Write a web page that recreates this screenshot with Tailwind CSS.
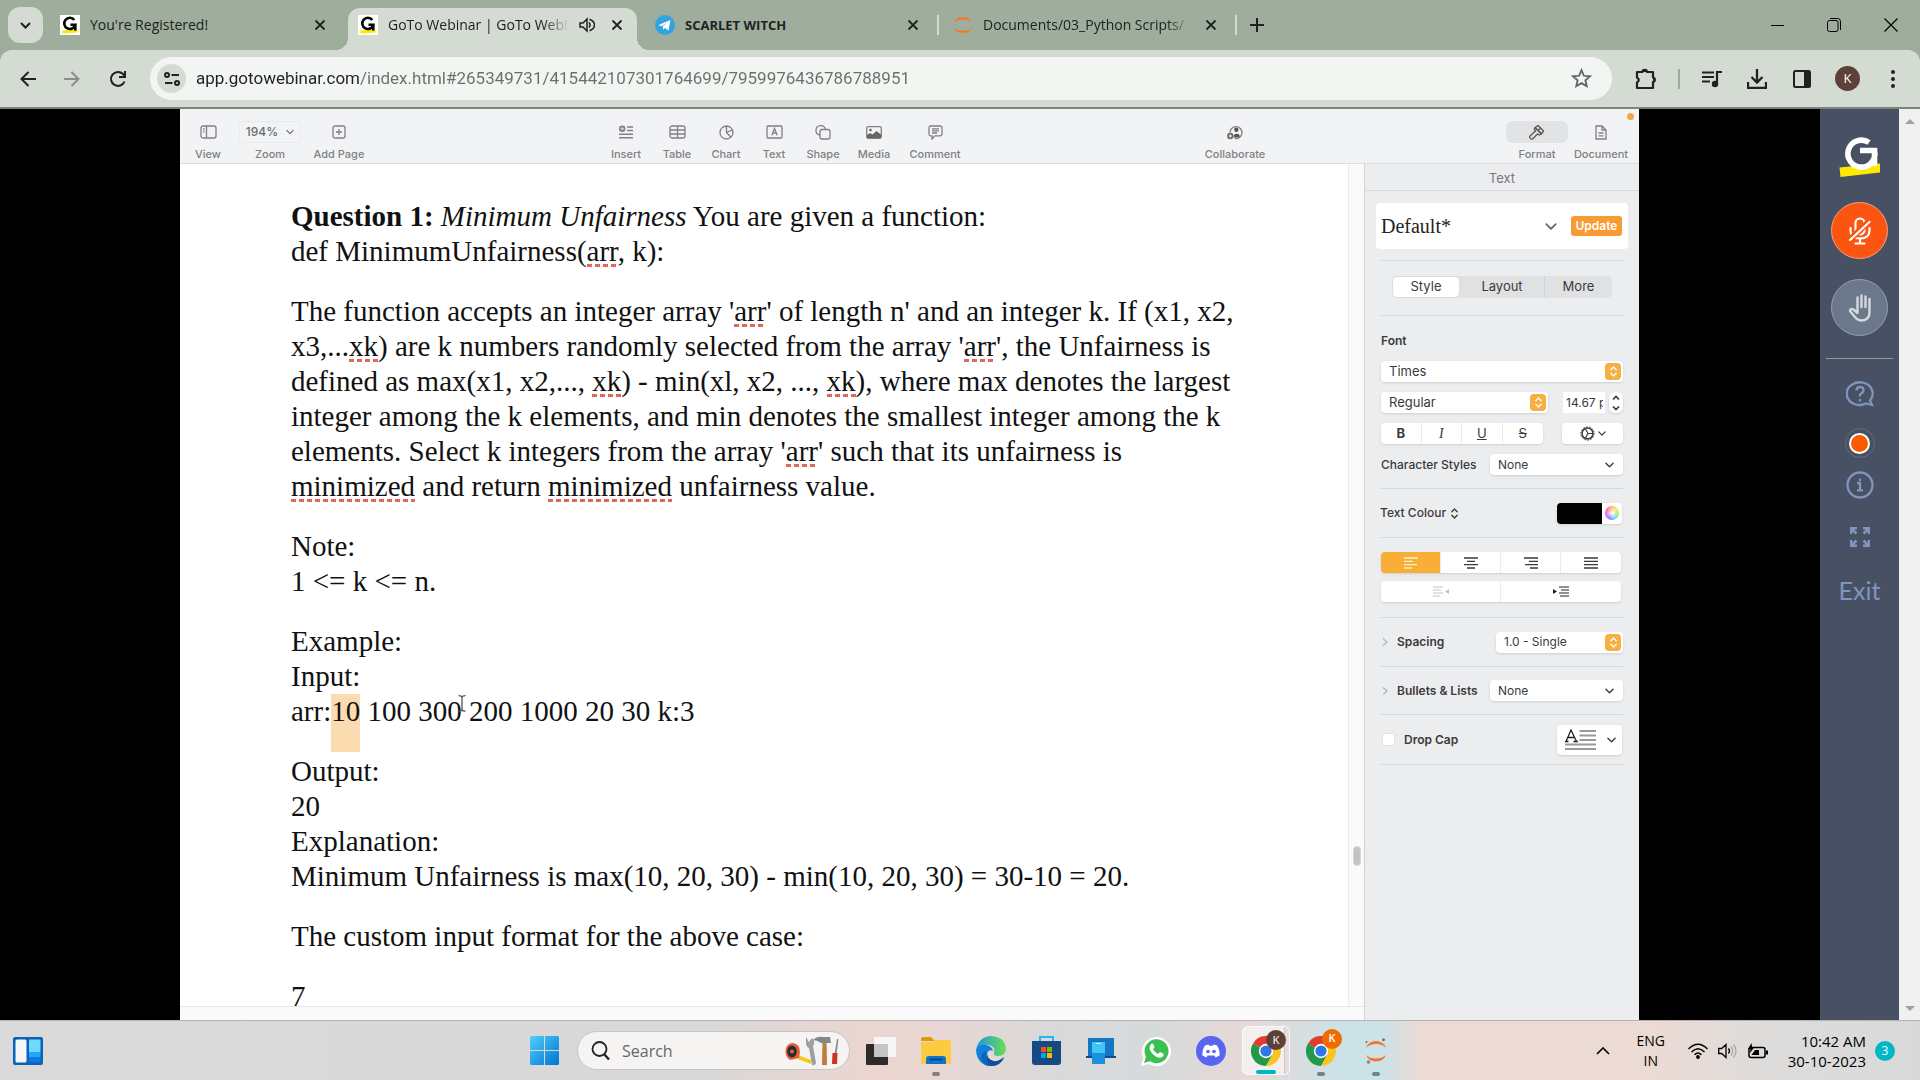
<!DOCTYPE html>
<html lang="en">
<head>
<meta charset="utf-8">
<title>GoTo Webinar | GoTo Webinar</title>
<script src="https://cdn.jsdelivr.net/npm/@tailwindcss/browser@4"></script>
</head>
<body class="flex h-screen flex-col overflow-hidden bg-black font-['Open_Sans','Noto_Sans',sans-serif] text-[#202124]">

<svg class="hidden" aria-hidden="true">
  <symbol id="close" viewBox="0 0 12 12"><path d="M1.5 1.5l9 9M10.5 1.5l-9 9" fill="none" stroke="currentColor" stroke-width="1.8"/></symbol>
  <symbol id="goto" viewBox="0 0 20 20"><rect width="20" height="20" fill="#fff"/><path d="M2.5 15.600l15-1v3l-15 1z" fill="#ffe900"/><path d="M14.300 5A5.600 5.600 0 1 0 15.300 9.700H10.500M15.300 9v6.500" fill="none" stroke="#000" stroke-width="2.600"/></symbol>
  <symbol id="jupyter" viewBox="0 0 20 20"><path d="M1 7C3 .5 17 .5 19 7 15 3.500 5 3.500 1 7zM1 13c2 6.500 16 6.500 18 0-4 3.500-14 3.500-18 0z" fill="#f37726"/></symbol>
  <symbol id="down" viewBox="0 0 10 6"><path d="M1 1l4 4 4-4" fill="none" stroke="currentColor" stroke-width="1.500" stroke-linecap="round" stroke-linejoin="round"/></symbol>
  <symbol id="updown" viewBox="0 0 10 14"><path d="M2 5l3-3 3 3M2 9l3 3 3-3" fill="none" stroke="currentColor" stroke-width="1.500" stroke-linecap="round" stroke-linejoin="round"/></symbol>
  <symbol id="chrome" viewBox="0 0 30 30"><path d="M15 15L2 7.500A15 15 0 0 1 28 7.500z" fill="#e33b2e"/><path d="M15 15L2 7.500A15 15 0 0 0 15 30l6.500-11.500z" fill="#229a4a"/><path d="M15 8h13.200A15 15 0 0 1 15 30l6.500-11.500z" fill="#fcc31e"/><circle cx="15" cy="15" r="7.200" fill="#fff"/><circle cx="15" cy="15" r="5.600" fill="#2f77e8"/></symbol>
</svg>

<!-- Tab strip -->
<header class="flex h-[50px] shrink-0 items-center bg-[#9fae9c] text-sm">
  <button aria-label="Search tabs" class="ml-2 flex h-9 w-[35px] items-center justify-center rounded-xl bg-[#d4dbd2]"><svg class="h-[7px] w-[11px]" viewBox="0 0 11 7"><path d="M1 1l4.500 4.500L10 1" fill="none" stroke="currentColor" stroke-width="2"/></svg></button>
  <nav class="ml-[7px] flex h-full items-end">
    <div class="flex h-[42px] w-[298px] items-center pr-[22px] pb-2 pl-[10px]">
      <svg class="size-5 shrink-0"><use href="#goto"/></svg>
      <a href="#" class="ml-[10px] flex-1 truncate">You're Registered!</a>
      <button aria-label="Close tab"><svg class="size-3"><use href="#close"/></svg></button>
    </div>
    <div class="relative mr-2 flex h-[42px] w-[289px] items-center rounded-t-xl bg-[#d4dbd2] pr-[14px] pb-2 pl-[10px]">
      <span class="absolute bottom-0 -left-3 size-3 bg-[radial-gradient(circle_at_0_0,transparent_12px,#d4dbd2_12px)]"></span>
      <span class="absolute -right-3 bottom-0 size-3 bg-[radial-gradient(circle_at_100%_0,transparent_12px,#d4dbd2_12px)]"></span>
      <svg class="size-5 shrink-0"><use href="#goto"/></svg>
      <a href="#" class="ml-[10px] w-[182px] whitespace-nowrap mask-r-from-85% mask-r-to-100%">GoTo Webinar | GoTo Webi</a>
      <button aria-label="Mute tab" class="ml-[9px]"><svg class="size-4" viewBox="0 0 16 16"><path d="M1 6h3l4-4v12l-4-4H1z" fill="none" stroke="currentColor" stroke-width="1.500"/><path d="M10 5.500q2 2.500 0 5M10.500 2.200q5 2 5 5.800t-5 5.800" fill="none" stroke="currentColor" stroke-width="1.500"/></svg></button>
      <button aria-label="Close tab" class="ml-auto"><svg class="size-3"><use href="#close"/></svg></button>
    </div>
    <div class="flex h-[42px] w-[298px] items-center pr-1 pb-2 pl-[10px]">
      <svg class="size-5 shrink-0" viewBox="0 0 20 20"><circle cx="10" cy="10" r="10" fill="#2fa4df"/><path d="M3.500 10L15.500 5l-2 10.500-3.500-2.600-1.800 1.700-.4-3.300L13 7.300l-6.500 4z" fill="#fff"/></svg>
      <a href="#" class="ml-[10px] flex-1 truncate font-bold text-[13px]">SCARLET WITCH</a>
      <button aria-label="Close tab"><svg class="size-3"><use href="#close"/></svg></button>
      <span class="ml-[18px] h-5 w-0.5 bg-[#d4dbd2]"></span>
    </div>
    <div class="flex h-[42px] w-[298px] items-center pr-1 pb-2 pl-[10px]">
      <svg class="size-5 shrink-0"><use href="#jupyter"/></svg>
      <a href="#" class="ml-[10px] w-[209px] whitespace-nowrap mask-r-from-88% mask-r-to-100%">Documents/03_Python Scripts/</a>
      <button aria-label="Close tab" class="ml-auto"><svg class="size-3"><use href="#close"/></svg></button>
      <span class="ml-[18px] h-5 w-0.5 bg-[#d4dbd2]"></span>
    </div>
    <button aria-label="New tab" class="mb-[18px] ml-[9px]"><svg class="size-[14px]" viewBox="0 0 14 14"><path d="M7 0v14M0 7h14" stroke="currentColor" stroke-width="2"/></svg></button>
  </nav>
  <div class="ml-auto flex items-center gap-[43px] pr-[22px] text-black">
    <button aria-label="Minimize"><svg class="size-[13px]" viewBox="0 0 13 13"><path d="M0 6.500h13" stroke="currentColor"/></svg></button>
    <button aria-label="Restore"><svg class="size-[14px]" viewBox="0 0 14 14" fill="none" stroke="currentColor"><rect x=".5" y="2.500" width="10.500" height="11" rx="2"/><path d="M3 .5h7.500a3 3 0 0 1 3 3V12"/></svg></button>
    <button aria-label="Close"><svg class="size-[14px]" viewBox="0 0 14 14"><path d="M.5.5l13 13M13.500.5l-13 13" stroke="currentColor" stroke-width="1.200"/></svg></button>
  </div>
</header>

<!-- Address bar -->
<div class="shrink-0 bg-[#9fae9c]">
<div class="flex h-[59px] items-center rounded-t-xl border-b-2 border-[#7c837b] bg-[#d4dbd2] pl-5">
  <button aria-label="Back"><svg class="size-4" viewBox="0 0 16 16"><path d="M16 8H2M8.500 1L1.500 8l7 7" fill="none" stroke="currentColor" stroke-width="2"/></svg></button>
  <button aria-label="Forward" class="ml-7 text-[#8b918a]"><svg class="size-4" viewBox="0 0 16 16"><path d="M0 8h14M7.500 1l7 7-7 7" fill="none" stroke="currentColor" stroke-width="2"/></svg></button>
  <button aria-label="Reload" class="ml-[29px]"><svg class="size-[18px]" viewBox="0 0 18 18"><path d="M15.500 11.500A7 7 0 1 1 14 4l2 2" fill="none" stroke="currentColor" stroke-width="2"/><path d="M17 1v7h-7V6h5V1z" fill="currentColor"/></svg></button>
  <div class="ml-[23px] flex h-[43px] flex-1 items-center rounded-full bg-[#f3f5f2] pr-5 pl-[7px]">
    <button aria-label="Site information" class="flex size-[29px] items-center justify-center rounded-full bg-[#d4dbd2]"><svg class="size-4" viewBox="0 0 16 16" fill="none" stroke="currentColor" stroke-width="2"><circle cx="3" cy="4" r="2"/><path d="M7.500 4H15M1 12h7.500"/><circle cx="13" cy="12" r="2"/></svg></button>
    <input aria-label="Address" value="app.gotowebinar.com/index.html#265349731/415442107301764699/7959976436786788951" class="ml-[10px] flex-1 bg-[linear-gradient(90deg,#202124_164px,#6a6e6b_164px)] bg-clip-text font-[Roboto,sans-serif] text-[17px] text-transparent outline-none">
    <button aria-label="Bookmark"><svg class="size-[21px] text-[#5f6361]" viewBox="0 0 20 20"><path d="M10 2l2.300 5.400 5.700.5-4.300 3.800 1.300 5.700-5-3-5 3 1.300-5.700L2 7.900l5.700-.5z" fill="none" stroke="currentColor" stroke-width="1.700"/></svg></button>
  </div>
  <div class="flex items-center pr-[25px] pl-[23px]">
    <button aria-label="Extensions"><svg class="size-[22px]" viewBox="0 0 22 22"><path d="M2 4h5.500a2.200 2.200 0 0 1 4.400 0H18v5.500a2.300 2.300 0 0 1 0 4.500v6H2v-5.500q3.500-2.500 0-5z" fill="none" stroke="currentColor" stroke-width="2.200" stroke-linejoin="round"/><path d="M7.500 4a2.300 2.300 0 0 1 4.500 0zM18 9.500a2.300 2.300 0 0 1 0 4.500z" fill="currentColor"/></svg></button>
    <span class="ml-[21px] h-5 w-0.5 bg-[#9fae9c]"></span>
    <button aria-label="Media controls" class="ml-[22px]"><svg class="h-[18px] w-5" viewBox="0 0 20 18"><path d="M0 2.500h12M0 7h12M0 11.500h8" stroke="currentColor" stroke-width="2"/><path d="M15 14V2h5" fill="none" stroke="currentColor" stroke-width="2.200"/><circle cx="13" cy="14" r="3.200" fill="currentColor"/></svg></button>
    <button aria-label="Downloads" class="ml-[25px]"><svg class="size-5" viewBox="0 0 20 20"><path d="M10 0v13M4.500 8L10 13.500 15.500 8M1 13v6h18v-6" fill="none" stroke="currentColor" stroke-width="2.300"/></svg></button>
    <button aria-label="Side panel" class="ml-[26px]"><svg class="h-5 w-[18px]" viewBox="0 0 18 20"><rect x="1" y="2" width="16" height="16" rx="1.500" fill="none" stroke="currentColor" stroke-width="2"/><path d="M11 2h6v16h-6z" fill="currentColor"/></svg></button>
    <button aria-label="Profile" class="ml-[24px] flex size-[25px] items-center justify-center rounded-full bg-[#5d4037] text-[13px] text-white">K</button>
    <button aria-label="Menu" class="ml-[31px]"><svg class="h-[18px] w-1" viewBox="0 0 4 18" fill="currentColor"><circle cx="2" cy="2" r="2"/><circle cx="2" cy="9" r="2"/><circle cx="2" cy="16" r="2"/></svg></button>
  </div>
</div>
</div>

<!-- Webinar page -->
<main class="flex min-h-0 flex-1">
  <section class="mr-[181px] ml-[180px] flex min-w-0 flex-1 flex-col bg-[#ecedef] font-[Inter,'Liberation_Sans',sans-serif]">

    <!-- Pages toolbar -->
    <div class="relative flex h-[55px] shrink-0 items-start border-b border-[#dcdddf] bg-[#f2f3f5] pt-3 pr-[5px] text-[11px] leading-4 font-medium text-[#808083]">
      <button class="mr-[3px] flex w-14 flex-col items-center gap-[3px]"><span class="flex h-[22px] items-center"><svg class="h-[14px] w-[17px]" viewBox="0 0 17 14" fill="none" stroke="currentColor" stroke-width="1.300"><rect x="1" y="1" width="15" height="12" rx="2"/><path d="M6.500 1v12M3 4h1.500M3 6.500h1.500"/></svg></span>View</button>
      <button class="flex w-[62px] flex-col items-center gap-[3px]"><span class="flex h-[22px] w-full items-center justify-center gap-2 rounded border border-[#e9eaec] text-[12px] text-[#6d6d70]">194%<svg class="h-[6px] w-2"><use href="#down"/></svg></span>Zoom</button>
      <button class="flex w-[76px] flex-col items-center gap-[3px]"><span class="flex h-[22px] items-center"><svg class="size-[14px]" viewBox="0 0 14 14" fill="none" stroke="currentColor" stroke-width="1.300"><rect x="1" y="1" width="12" height="12" rx="2"/><path d="M7 4v6M4 7h6"/></svg></span>Add Page</button>
      <span class="grow-[224] basis-0"></span>
      <button class="flex w-[50px] flex-col items-center gap-[3px]"><span class="flex h-[22px] items-center"><svg class="size-[14px]" viewBox="0 0 14 14" stroke="currentColor" stroke-width="1.400"><path d="M8 2h6M8 5.500h6M0 9.200h14M0 12.800h14"/><circle cx="3.200" cy="3.700" r="3.200" fill="currentColor" stroke="none"/><path d="M3.200 2v3.400M1.500 3.700h3.400" stroke="#f2f3f5" stroke-width=".8"/></svg></span>Insert</button>
      <button class="flex w-[52px] flex-col items-center gap-[3px]"><span class="flex h-[22px] items-center"><svg class="h-[14px] w-[17px]" viewBox="0 0 17 14" fill="none" stroke="currentColor" stroke-width="1.300"><rect x="1" y="1" width="15" height="12" rx="2"/><path d="M8.500 1v12M1 5h15M1 9h15"/></svg></span>Table</button>
      <button class="flex w-[46px] flex-col items-center gap-[3px]"><span class="flex h-[22px] items-center"><svg class="size-[15px]" viewBox="0 0 15 15" fill="none" stroke="currentColor" stroke-width="1.300"><circle cx="7.500" cy="7.500" r="6.500"/><path d="M7.500 1v6.500l4.500 4.700M7.500 7.500L13 5"/></svg></span>Chart</button>
      <button class="flex w-[50px] flex-col items-center gap-[3px]"><span class="flex h-[22px] items-center"><svg class="h-[14px] w-[17px]" viewBox="0 0 17 14" fill="none" stroke="currentColor" stroke-width="1.300"><rect x="1" y="1" width="15" height="12" rx="1"/><path d="M5.800 10.300L8.500 3.500l2.700 6.800M6.700 8h3.600"/></svg></span>Text</button>
      <button class="flex w-12 flex-col items-center gap-[3px]"><span class="flex h-[22px] items-center"><svg class="h-[15px] w-4" viewBox="0 0 16 15" fill="none" stroke="currentColor" stroke-width="1.300"><path d="M5 10a4.700 4.700 0 1 1 5.300-5.500"/><rect x="5" y="4.500" width="10" height="9.500" rx="2"/></svg></span>Shape</button>
      <button class="flex w-[54px] flex-col items-center gap-[3px]"><span class="flex h-[22px] items-center"><svg class="h-[13px] w-4" viewBox="0 0 16 13"><rect x=".7" y=".7" width="14.600" height="11.600" rx="1.500" fill="none" stroke="currentColor" stroke-width="1.300"/><circle cx="4.500" cy="4" r="1.300" fill="#666"/><path d="M1 12V9l3-2 2.500 1.500L10.500 5 15 8.500V12z" fill="#666"/></svg></span>Media</button>
      <button class="flex w-[68px] flex-col items-center gap-[3px]"><span class="flex h-[22px] items-center"><svg class="size-[15px]" viewBox="0 0 15 15" fill="none" stroke="currentColor" stroke-width="1.300"><path d="M2.500 1h10A1.800 1.800 0 0 1 14 2.700V9a1.800 1.800 0 0 1-1.700 1.800H7L4 14v-3.200H2.500A1.700 1.700 0 0 1 1 9V2.700A1.700 1.700 0 0 1 2.500 1zM4 3.800h7M4 5.900h7M4 8h5"/></svg></span>Comment</button>
      <span class="grow-[228] basis-0"></span>
      <button class="flex w-[76px] flex-col items-center gap-[3px]"><span class="flex h-[22px] items-center"><svg class="size-4" viewBox="0 0 16 16"><path d="M3 8.500a6 6 0 1 1 5 6" fill="none" stroke="currentColor" stroke-width="1.300"/><circle cx="9.300" cy="5.800" r="2.200" fill="#555"/><path d="M7 13.800V11q3-2.500 5.500 0v2z" fill="#555"/><circle cx="3.300" cy="12" r="3.200" fill="#666"/><path d="M3.300 10.300v3.400M1.600 12H5" stroke="#f2f3f5"/></svg></span>Collaborate</button>
      <span class="grow-[233] basis-0"></span>
      <button class="flex w-[62px] flex-col items-center gap-[3px]"><span class="flex h-[22px] w-full items-center justify-center rounded-md bg-[#e2e3e5] text-[#555]"><svg class="size-4" viewBox="0 0 16 16" fill="none" stroke="currentColor" stroke-width="1.300" stroke-linejoin="round"><path d="M9 1.500L14.500 7l-2 2.800-6.500-6z"/><path d="M6 3.800l6.500 6-2 1.200-2-1-5 5q-1.500.5-2.500-1t.5-2.500l5-4.500-1.200-1.700zM11.500 4l-2 2"/></svg></span>Format</button>
      <button class="flex w-[66px] flex-col items-center gap-[3px]"><span class="flex h-[22px] items-center"><svg class="h-[15px] w-3" viewBox="0 0 12 15" fill="none" stroke="currentColor" stroke-width="1.300"><path d="M1 1h6l4 4v9H1zM7 1v4h4M3.500 8h5M3.500 10.800h5"/></svg></span>Document</button>
      <span class="absolute top-1 right-[5px] size-[7px] rounded-full bg-[#f0a54f]"></span>
    </div>

    <div class="flex min-h-0 flex-1">
      <!-- Document canvas -->
      <div class="flex min-w-0 flex-1 flex-col bg-[#fafafa]">
        <div class="flex min-h-0 flex-1">
          <article class="flex min-w-0 flex-1 flex-col gap-[25px] border-r border-[#ececec] bg-white pt-[35px] pl-[111px] font-['Liberation_Serif',serif] text-[29px] leading-[35px] whitespace-nowrap text-[#111]">
            <p><b>Question 1:</b> <i>Minimum Unfairness</i> You are given a function:<br>def MinimumUnfairness(<span class="bg-[repeating-linear-gradient(90deg,#e0685c_0_5px,transparent_5px_8px)] bg-[length:100%_3px] bg-bottom bg-no-repeat">arr</span>, k):</p>
            <p>The function accepts an integer array '<span class="bg-[repeating-linear-gradient(90deg,#e0685c_0_5px,transparent_5px_8px)] bg-[length:100%_3px] bg-bottom bg-no-repeat">arr</span>' of length n' and an integer k. If (x1, x2,<br>x3,...<span class="bg-[repeating-linear-gradient(90deg,#e0685c_0_5px,transparent_5px_8px)] bg-[length:100%_3px] bg-bottom bg-no-repeat">xk</span>) are k numbers randomly selected from the array '<span class="bg-[repeating-linear-gradient(90deg,#e0685c_0_5px,transparent_5px_8px)] bg-[length:100%_3px] bg-bottom bg-no-repeat">arr</span>', the Unfairness is<br>defined as max(x1, x2,..., <span class="bg-[repeating-linear-gradient(90deg,#e0685c_0_5px,transparent_5px_8px)] bg-[length:100%_3px] bg-bottom bg-no-repeat">xk</span>) - min(xl, x2, ..., <span class="bg-[repeating-linear-gradient(90deg,#e0685c_0_5px,transparent_5px_8px)] bg-[length:100%_3px] bg-bottom bg-no-repeat">xk</span>), where max denotes the largest<br>integer among the k elements, and min denotes the smallest integer among the k<br>elements. Select k integers from the array '<span class="bg-[repeating-linear-gradient(90deg,#e0685c_0_5px,transparent_5px_8px)] bg-[length:100%_3px] bg-bottom bg-no-repeat">arr</span>' such that its unfairness is<br><span class="bg-[repeating-linear-gradient(90deg,#e0685c_0_5px,transparent_5px_8px)] bg-[length:100%_3px] bg-bottom bg-no-repeat">minimized</span> and return <span class="bg-[repeating-linear-gradient(90deg,#e0685c_0_5px,transparent_5px_8px)] bg-[length:100%_3px] bg-bottom bg-no-repeat">minimized</span> unfairness value.</p>
            <p>Note:<br>1 &lt;= k &lt;= n.</p>
            <p>Example:<br>Input:<br>arr:<span class="relative inline-block"><span class="absolute top-0 left-0 h-[58px] w-full bg-[#fbdcb0]"></span><span class="relative">10</span></span> 100 300<span class="relative"><svg class="absolute top-0 -left-1 h-[17px] w-2" viewBox="0 0 8 17"><path d="M.5.700q3.500 0 3.500 2v11.500q0 2-3.500 2M7.500.700Q4 .700 4 2.700M7.500 16.200q-3.500 0-3.500-2" fill="none" stroke="#555" stroke-width="1.300"/></svg></span> 200 1000 20 30 k:3</p>
            <p>Output:<br>20<br>Explanation:<br>Minimum Unfairness is max(10, 20, 30) - min(10, 20, 30) = 30-10 = 20.</p>
            <p>The custom input format for the above case:</p>
            <p>7</p>
          </article>
          <div class="flex w-[15px] flex-col items-center pt-[682px]"><span class="h-5 w-2 rounded-full border border-[#d5d5d5] bg-[#c2c2c2]"></span></div>
        </div>
        <div class="h-[14px] shrink-0 border-t border-[#e6e6e6]"></div>
      </div>

      <!-- Format inspector -->
      <aside class="w-[275px] shrink-0 border-l border-[#d2d3d5] text-[13px] text-[#3a3a3c]">
        <h2 class="h-[27px] border-b border-[#d6d8da] text-center text-[13px] leading-7 text-[#77787b]">Text</h2>
        <div class="mx-[11px] mt-3 flex h-[46px] items-center rounded bg-white pr-[6px] pl-[5px]">
          <span class="flex-1 font-['Liberation_Serif',serif] text-xl text-[#222]">Default*</span>
          <button aria-label="Paragraph styles"><svg class="mr-[14px] h-[7px] w-3 text-[#666]"><use href="#down"/></svg></button>
          <button class="h-5 w-[51px] rounded-[3px] bg-[#f99b33] text-xs font-semibold text-white">Update</button>
        </div>
        <div class="mr-4 ml-4 divide-y divide-[#d4d7d9]">
          <div class="h-[12px]"></div>
          <div class="h-[55px] px-[11px] pt-[15px]">
            <div class="flex h-[22px] rounded-[5px] bg-[#e0e1e3]">
              <button class="w-[68px] rounded-[5px] border border-[#dcdcde] bg-white">Style</button>
              <button class="flex-1">Layout</button>
              <button class="w-[68px] border-l border-[#d3d4d6]">More</button>
            </div>
          </div>
          <div class="flex h-[173px] flex-col pt-[15px]">
            <h3 class="text-xs leading-5 font-semibold">Font</h3>
            <div class="relative mt-[10px] h-[21px]">
              <select aria-label="Font family" class="h-full w-full appearance-none rounded bg-white pl-2 shadow-sm outline-none"><option>Times</option></select>
              <span class="pointer-events-none absolute top-[2px] right-[2px] flex h-[17px] w-4 items-center justify-center rounded bg-[#f5b041] text-white"><svg class="h-[13px] w-[9px]"><use href="#updown"/></svg></span>
            </div>
            <div class="mt-[10px] flex h-[21px]">
              <div class="relative w-[167px]">
                <select aria-label="Typeface" class="h-full w-full appearance-none rounded bg-white pl-2 shadow-sm outline-none"><option>Regular</option></select>
                <span class="pointer-events-none absolute top-[2px] right-[2px] flex h-[17px] w-4 items-center justify-center rounded bg-[#f5b041] text-white"><svg class="h-[13px] w-[9px]"><use href="#updown"/></svg></span>
              </div>
              <input aria-label="Font size" value="14.67 pt" class="mr-1 ml-auto w-[42px] border-r-2 border-white bg-white pl-[3px] text-xs outline-none">
              <button aria-label="Change font size" class="flex w-[14px] items-center justify-center rounded-md bg-white shadow-sm"><svg class="h-[18px] w-[10px]" viewBox="0 0 10 18" fill="none" stroke="currentColor" stroke-width="1.700"><path d="M2 5.500l3-3 3 3M2 12.500l3 3 3-3"/></svg></button>
            </div>
            <div class="mt-[10px] flex h-[21px] shrink-0 justify-between">
              <div class="grid w-[162px] grid-cols-4 divide-x divide-[#ececee] rounded bg-white shadow-sm">
                <button class="font-bold">B</button><button class="font-['Liberation_Serif',serif] text-sm italic">I</button><button class="underline">U</button><button class="line-through">S</button>
              </div>
              <button aria-label="Advanced options" class="flex w-[61px] items-center justify-center gap-[3px] rounded bg-white shadow-sm"><svg class="size-[15px]" viewBox="0 0 15 15" fill="none" stroke="currentColor" stroke-width="1.500"><circle cx="7.500" cy="7.500" r="5.500"/><circle cx="7.500" cy="7.500" r="6.700" stroke-width="1" stroke-dasharray="1.500 1.500"/><path d="M5.500 3l2.500 4.500L5.500 12M8 7.500h5" stroke-width="1.200"/></svg><svg class="h-[5px] w-2"><use href="#down"/></svg></button>
            </div>
            <div class="mt-[10px] flex h-[21px] items-center justify-between">
              <label for="cs" class="text-xs font-medium">Character Styles</label>
              <div class="relative h-full w-[133px]">
                <select id="cs" class="h-full w-full appearance-none rounded bg-white pl-2 text-xs shadow-sm outline-none"><option>None</option></select>
                <svg class="pointer-events-none absolute top-[8px] right-[9px] h-[6px] w-[9px]"><use href="#down"/></svg>
              </div>
            </div>
          </div>
          <div class="flex h-[49px] items-center justify-between pr-px">
            <button class="-ml-px flex items-center gap-1 text-xs font-medium">Text Colour<svg class="h-[13px] w-[9px]"><use href="#updown"/></svg></button>
            <div class="flex h-[21px] overflow-hidden rounded bg-white shadow-sm">
              <button aria-label="Colour swatch" class="w-[45px] bg-black"></button>
              <button aria-label="Colour wheel" class="flex w-5 items-center justify-center"><span class="size-[14px] rounded-full bg-[radial-gradient(#fff,transparent_80%),conic-gradient(#fa5,#fd3,#7e4,#4cf,#65f,#d4f,#f45,#fa5)]"></span></button>
            </div>
          </div>
          <div class="flex h-20 flex-col gap-2 pt-[14px] pr-0.5">
            <div class="grid h-[21px] grid-cols-4 divide-x divide-[#ececee] overflow-hidden rounded bg-white shadow-sm">
              <button aria-label="Align left" class="flex items-center justify-center bg-[#f9ae38] text-[#fff0cc]"><svg class="h-3 w-[14px]" viewBox="0 0 14 12" stroke="currentColor" stroke-width="1.300"><path d="M0 1h14M0 4.300h9M0 7.600h13M0 11h8"/></svg></button>
              <button aria-label="Align centre" class="flex items-center justify-center"><svg class="h-3 w-[14px]" viewBox="0 0 14 12" stroke="currentColor" stroke-width="1.300"><path d="M0 1h14M3 4.300h8M0 7.600h14M3 11h8"/></svg></button>
              <button aria-label="Align right" class="flex items-center justify-center"><svg class="h-3 w-[14px]" viewBox="0 0 14 12" stroke="currentColor" stroke-width="1.300"><path d="M0 1h14M5 4.300h9M1 7.600h13M6 11h8"/></svg></button>
              <button aria-label="Justify" class="flex items-center justify-center"><svg class="h-3 w-[14px]" viewBox="0 0 14 12" stroke="currentColor" stroke-width="1.300"><path d="M0 1h14M0 4.300h14M0 7.600h14M0 11h14"/></svg></button>
            </div>
            <div class="grid h-[21px] grid-cols-2 divide-x divide-[#ececee] rounded bg-white shadow-sm">
              <button aria-label="Decrease indent" class="flex items-center justify-center text-[#c3c3c5]"><svg class="h-[11px] w-4" viewBox="0 0 16 11"><path d="M0 1h10M0 4h8M0 7h10M0 10h7" stroke="currentColor" stroke-width="1.200"/><path d="M16 3v5l-4-2.500z" fill="currentColor"/></svg></button>
              <button aria-label="Increase indent" class="flex items-center justify-center text-[#222]"><svg class="h-[11px] w-4" viewBox="0 0 16 11"><path d="M6 1h10M8 4h8M6 7h10M7 10h9" stroke="currentColor" stroke-width="1.200"/><path d="M0 3v5l4-2.500z" fill="currentColor"/></svg></button>
            </div>
          </div>
          <div class="flex h-[49px] items-center">
            <svg class="ml-px h-2 w-[6px] text-[#b5b6b8]" viewBox="0 0 6 8"><path d="M1 .5L5 4 1 7.500" fill="none" stroke="currentColor" stroke-width="1.300"/></svg>
            <label for="sp" class="ml-[9px] flex-1 text-xs font-semibold">Spacing</label>
            <div class="relative h-[21px] w-[127px]">
              <select id="sp" class="h-full w-full appearance-none rounded bg-white pl-2 text-xs shadow-sm outline-none"><option>1.0 - Single</option></select>
              <span class="pointer-events-none absolute top-[2px] right-[2px] flex h-[17px] w-4 items-center justify-center rounded bg-[#f5b041] text-white"><svg class="h-[13px] w-[9px]"><use href="#updown"/></svg></span>
            </div>
          </div>
          <div class="flex h-[48px] items-center">
            <svg class="ml-px h-2 w-[6px] text-[#b5b6b8]" viewBox="0 0 6 8"><path d="M1 .5L5 4 1 7.500" fill="none" stroke="currentColor" stroke-width="1.300"/></svg>
            <label for="bl" class="ml-[9px] flex-1 text-xs font-semibold">Bullets &amp; Lists</label>
            <div class="relative h-[21px] w-[133px]">
              <select id="bl" class="h-full w-full appearance-none rounded bg-white pl-2 text-xs shadow-sm outline-none"><option>None</option></select>
              <svg class="pointer-events-none absolute top-[8px] right-[9px] h-[6px] w-[9px]"><use href="#down"/></svg>
            </div>
          </div>
          <div class="flex h-[50px] items-center border-b border-[#d4d7d9] pr-px">
            <input id="dc" type="checkbox" class="ml-px size-[13px] appearance-none rounded-[3px] border border-[#e2e2e4] bg-white">
            <label for="dc" class="ml-[9px] flex-1 text-xs font-semibold">Drop Cap</label>
            <button aria-label="Drop cap style" class="flex h-[30px] w-[65px] items-center gap-[11px] rounded bg-white pl-2 shadow-sm"><svg class="h-[22px] w-[31px]" viewBox="0 0 31 22"><path d="M14.500 2H31M14.500 6.500H31M14.500 11H31M0 15.500h31M0 20h31" stroke="#999" stroke-width="2"/><path d="M1 12.500L6 1l5.500 11.500M3 8.500h6M0 12.500h3.500M8.500 12.500H13" fill="none" stroke="#222" stroke-width="1.300"/></svg><svg class="h-[6px] w-[9px]"><use href="#down"/></svg></button>
          </div>
        </div>
      </aside>
    </div>
  </section>

  <!-- GoTo control rail -->
  <nav class="flex w-[79px] shrink-0 flex-col items-center bg-[#485063] pt-6 text-[#7f95bb]">
    <svg class="h-[45px] w-[42px]" viewBox="0 0 42 45"><path d="M.5 34.500L41 30.500v9L1.500 44z" fill="#ffe900"/><path d="M30 9.500A13.500 13.500 0 1 0 35.500 17.500H21M35.500 15v18" fill="none" stroke="#fff" stroke-width="5.600"/></svg>
    <button aria-label="Unmute" class="mt-6 flex size-[57px] items-center justify-center rounded-full border border-[#f9a07a] bg-[#fc5511] text-white"><svg class="h-7 w-6" viewBox="0 0 24 28" fill="none" stroke="currentColor" stroke-width="2.200" stroke-linecap="round"><rect x="7.500" y="1.500" width="9" height="16" rx="4.500"/><path d="M2.500 11v2.500q0 8 9.500 8t9.500-8V11M12 21.500V26M7.500 26.500h9"/><path d="M1.500 23L21 4.500" stroke="#fc5511" stroke-width="6"/><path d="M2 23L21.500 5"/></svg></button>
    <button aria-label="Raise hand" class="mt-5 flex size-[57px] items-center justify-center rounded-full border border-[#959fac] bg-[#6b788b] text-[#d5d9df]"><svg class="h-7 w-6" viewBox="0 0 24 28" fill="none" stroke="currentColor" stroke-width="2.400" stroke-linejoin="round" stroke-linecap="round"><path d="M9.500 14V3.500M13.500 13V1.500M17.500 13V2.500M21.500 5v13q0 8.500-8 8.500-4 0-7-4L2 17q0-3 3.500-1.500l4 3.500V4"/></svg></button>
    <hr class="mt-[22px] w-[67px] border-[#9299a5]">
    <button aria-label="Questions" class="mt-[22px]"><svg class="h-[26px] w-7" viewBox="0 0 28 26" fill="none" stroke="currentColor" stroke-width="2.300"><path d="M26 24l-6-1.500A13 11.300 0 1 1 24 19.500z"/><path d="M10.500 9.500q0-3.500 3.500-3.500t3.500 3.200q0 2-2 3T14 15.500M14 18v2.500"/></svg></button>
    <button aria-label="Recording" class="mt-[21px] flex size-[30px] items-center justify-center rounded-full border border-[#626a7b]"><span class="size-[21px] rounded-full border-2 border-white bg-[#fa5a00]"></span></button>
    <button aria-label="Information" class="mt-[13px]"><svg class="size-7" viewBox="0 0 28 28" fill="none" stroke="currentColor" stroke-width="2.300"><circle cx="14" cy="14" r="12.500"/><path d="M11 12h3v7M11 19.300h6M14 7.500v2.500"/></svg></button>
    <button aria-label="Full screen" class="mt-[28px]"><svg class="size-5" viewBox="0 0 20 20" fill="none" stroke="currentColor" stroke-width="2.500"><path d="M1.200 7V1.200H7M13 1.200h5.800V7M18.800 13v5.800H13M7 18.800H1.200V13M1.500 1.500l5 5M18.500 1.500l-5 5M18.500 18.500l-5-5M1.500 18.500l5-5"/></svg></button>
    <button class="mt-[27px] font-[Lato,sans-serif] text-[25px] leading-8">Exit</button>
  </nav>
  <div class="flex w-[21px] shrink-0 flex-col items-center justify-between bg-[#f0f0f0] pt-[10px] pb-[9px] text-[#a0a0a0]">
    <svg class="h-[5px] w-[10px]" viewBox="0 0 10 5" fill="currentColor"><path d="M0 5l5-5 5 5z"/></svg>
    <svg class="h-[5px] w-[10px]" viewBox="0 0 10 5" fill="currentColor"><path d="M0 0l5 5 5-5z"/></svg>
  </div>
</main>

<!-- Taskbar -->
<footer class="flex h-[60px] shrink-0 items-center border-t border-[#b4b2b3] bg-[linear-gradient(90deg,#dadada_0%,#d9d8d8_37%,#ebd5d0_45%,#ead6d3_48%,#dad9da_55%,#d6dadb_60%,#e7d9d8_65%,#cbe2e8_70%,#cbe2e7_72%,#ecdad4_74%,#ecdad4_86%,#dddcdb_92%,#d9d9da_100%)] pr-[25px]">
  <button aria-label="Widgets" class="ml-[13px]"><svg class="h-7 w-[30px]" viewBox="0 0 30 28"><rect width="30" height="28" rx="2" fill="#0b62b8"/><rect x="2.500" y="2.500" width="11" height="23" rx="1.500" fill="#f4f6f8"/><rect x="16" y="2.500" width="11.500" height="12.500" rx="1" fill="#6fd8fb"/><rect x="16" y="15" width="11.500" height="5" fill="#22a6f7"/><rect x="16" y="20" width="11.500" height="5.500" fill="#087ae0"/></svg></button>
  <div class="ml-[487px] flex items-center">
    <button aria-label="Start"><svg class="size-[29px]" viewBox="0 0 29 29"><defs><linearGradient id="win" x2="1" y2="1"><stop stop-color="#4fd0fb"/><stop offset="1" stop-color="#0373d3"/></linearGradient></defs><path d="M1 0h13v14H0V1zM15 0h13l1 1v13H15zM0 15h14v14H1l-1-1zM15 15h14v13l-1 1H15z" fill="url(#win)"/></svg></button>
    <label class="ml-[18px] flex h-[39px] w-[273px] items-center rounded-full border border-[#c8c4c3] bg-[#f5f4f3] pr-[9px] pl-[13px]">
      <svg class="size-[19px] shrink-0" viewBox="0 0 19 19" fill="none" stroke="#222"><circle cx="8.500" cy="8" r="7" stroke-width="1.800"/><path d="M13 13l5 5.500" stroke-width="2.300"/></svg>
      <input aria-label="Search" placeholder="Search" class="ml-3 w-0 flex-1 bg-transparent text-base text-[#666] outline-none placeholder:text-[#666]">
      <svg class="h-[30px] w-[56px]" viewBox="0 0 56 30"><path d="M14 19l13 5v4l-13-5z" fill="#f6c915"/><path d="M2 12q2-5 7-5 7 1 7 9l-1 6-9 2q-6-4-4-12z" fill="#e65f3c"/><ellipse cx="8" cy="15.500" rx="4.800" ry="6" fill="#2c2c30"/><circle cx="8" cy="15.500" r="2" fill="#e65f3c"/><path d="M22 1l3 5 3-4q4 3 1 8l3 17q-1 3-4 2l-3-17q-4-1-3-11z" fill="#9ba0a2"/><path d="M38.500 5h4l.5 24h-5z" fill="#be7c3e"/><path d="M29 4q4-4 9-3h8l1 6H37q-4-3-8-3z" fill="#83888b"/><path d="M53 3l1.500.3-2 15h-2z" fill="#858b8e"/><path d="M48.500 17h5l-.5 11h-5z" fill="#cf3020"/></svg>
    </label>
    <div class="flex items-center">
      <button aria-label="Task view" class="ml-3 flex h-[50px] w-[38px] items-center justify-center"><svg class="size-[30px]" viewBox="0 0 30 30"><rect y="8" width="22" height="21" rx="1" fill="#2b2b2b"/><rect x="8" y="1" width="22" height="20" rx="1" fill="#f6f6f6"/><rect x="8" y="8" width="14" height="13" fill="#c6c4c4"/></svg></button>
      <button aria-label="File Explorer" class="relative ml-[17px] flex h-[50px] w-[38px] items-center justify-center"><svg class="h-[27px] w-[30px]" viewBox="0 0 30 27"><path d="M0 2q0-2 2-2h8l4 4H0z" fill="#dd9b0a"/><path d="M0 5h11l3-2h15q1 0 1 1.500V27H0z" fill="#fdcb42"/><path d="M5 27v-5q0-3 3-3h14q3 0 3 3v5z" fill="#1174c9"/><path d="M8.500 22.500h13" stroke="#063f78" stroke-width="1.500"/></svg><span class="absolute bottom-0 h-1 w-2 rounded-full bg-[#858080]"></span></button>
      <button aria-label="Edge" class="ml-[17px] flex h-[50px] w-[38px] items-center justify-center"><svg class="size-[30px]" viewBox="0 0 30 30"><defs><linearGradient id="edge" x2="1"><stop stop-color="#1996e3"/><stop offset="1" stop-color="#6be04f"/></linearGradient></defs><path d="M0 15C1 5 8 0 15 0q14 1 15 12 0 8-8 8-5 0-4-3 2-6-5-8-8-1-13 6z" fill="url(#edge)"/><path d="M0 14q4-6 10-5 6 1 7 6-4-2-6 2-1 6 6 8 6 1 11-4-4 9-13 9Q1 29 0 14z" fill="#1180d8"/><path d="M11 15q-4 9 5 15Q7 31 5 22q0-5 6-7z" fill="#0864bd"/><path d="M11.500 17q-1 6 6 8 5 1 11-4-4 9-13 9-7-4-4-13z" fill="#104f96"/></svg></button>
      <button aria-label="Microsoft Store" class="ml-[17px] flex h-[50px] w-[38px] items-center justify-center"><svg class="size-[29px]" viewBox="0 0 29 29"><path d="M8 6V1h13v5" fill="none" stroke="#2ab4f3" stroke-width="2"/><path d="M0 5h29v21q0 3-3 3H3q-3 0-3-3z" fill="#174a83"/><path d="M9 11h5v5H9z" fill="#f25022"/><path d="M15 11h5v5h-5z" fill="#7fba00"/><path d="M9 17h5v5H9z" fill="#00a4ef"/><path d="M15 17h5v5h-5z" fill="#ffb900"/></svg></button>
      <button aria-label="Phone Link" class="ml-[17px] flex h-[50px] w-[38px] items-center justify-center"><svg class="h-[26px] w-[30px]" viewBox="0 0 30 26"><path d="M2 0h26v19H2z" fill="#1276c5"/><path d="M0 18h30v2H0z" fill="#0a4f8b"/><path d="M6 4h13v22H6z" fill="#1a91dc"/><path d="M6 4h13v11H6z" fill="#43c5f5"/><path d="M10 5.500h5" stroke="#dff6ff"/></svg></button>
      <button aria-label="WhatsApp" class="ml-[17px] flex h-[50px] w-[38px] items-center justify-center"><svg class="size-[30px]" viewBox="0 0 30 30"><path d="M0 30l2.500-8A14.500 14.500 0 1 1 8 28z" fill="#fff"/><path d="M3 27l2-6a12 12 0 1 1 4 4.300z" fill="#3bbf50"/><path d="M10 8q1.500-1 2.500.5l1 2.700-1.500 2q2 3.500 5 4.800l2-2 3.500 1.800q.5 3-3 4-4 .5-8-4-5-5.500-1.500-9.800z" fill="#fff"/></svg></button>
      <button aria-label="Discord" class="ml-[17px] flex h-[50px] w-[38px] items-center justify-center"><svg class="size-[30px]" viewBox="0 0 30 30"><circle cx="15" cy="15" r="15" fill="#5865f2"/><path d="M9 9.500l3.500-1 .7 1.200h3.600l.7-1.200 3.500 1q3 4.500 2.600 10l-4 2-1.200-2h-6.800l-1.200 2-4-2Q6 14 9 9.500z" fill="#fff"/><circle cx="12" cy="15.500" r="1.800" fill="#5865f2"/><circle cx="18" cy="15.500" r="1.800" fill="#5865f2"/></svg></button>
      <button aria-label="Chrome, profile K" class="relative ml-[12px] flex h-[49px] w-[48px] items-center justify-center rounded-md border border-white/60 bg-[#f3efef]"><span class="absolute top-0 right-0 h-full w-[5px] rounded-r-md border-l border-[#cfc8c8] bg-[#e6dcdc]"></span><svg class="size-[30px]"><use href="#chrome"/></svg><span class="absolute top-[3px] right-[3px] flex size-5 items-center justify-center rounded-full bg-[#5d4037] text-[11px] font-semibold text-[#ddd]">K</span><span class="absolute bottom-0 h-1 w-5 rounded-full bg-[#00b7c3]"></span></button>
      <button aria-label="Chrome, second profile K" class="relative ml-[12px] flex h-[50px] w-[38px] items-center justify-center"><svg class="size-[30px]"><use href="#chrome"/></svg><span class="absolute top-[3px] -right-0.5 flex size-5 items-center justify-center rounded-full bg-[#ef6c00] text-[11px] font-semibold text-white">K</span><span class="absolute bottom-0 h-1 w-2 rounded-full bg-[#6f8486]"></span></button>
      <button aria-label="Jupyter" class="relative ml-[17px] flex h-[50px] w-[38px] items-center justify-center"><svg class="size-[26px]" viewBox="0 0 26 26"><path d="M3 9.500Q6 3 13 3t10 6.500Q19 6 13 6T3 9.500zM3 17q3 6.500 10 6.500T23 17q-4 3.500-10 3.500T3 17z" fill="#f37726"/><circle cx="20.500" cy="1.800" r="1.400" fill="#666"/><circle cx="3.500" cy="4" r="1" fill="#666"/><circle cx="5.500" cy="24" r="1.800" fill="#888"/></svg><span class="absolute bottom-0 h-1 w-2 rounded-full bg-[#6f8486]"></span></button>
    </div>
  </div>
  <div class="ml-auto flex items-center text-[15px] leading-5 text-black">
    <button aria-label="Show hidden icons"><svg class="h-2 w-[14px]" viewBox="0 0 14 8"><path d="M1 7l6-6 6 6" fill="none" stroke="currentColor" stroke-width="1.600"/></svg></button>
    <button class="ml-[26px] w-[30px] text-center text-sm leading-5">ENG<br>IN</button>
    <button aria-label="Network, sound and battery" class="ml-[22px] flex items-center gap-[10px]">
      <svg class="h-4 w-5" viewBox="0 0 20 16" fill="none" stroke="currentColor" stroke-width="1.400"><path d="M.5 6q9.500-9.500 19 0M3.500 9q6.500-6.500 13 0M6.500 11.800q3.500-3.500 7 0"/><circle cx="10" cy="14" r="1.200" fill="currentColor"/></svg>
      <svg class="h-4 w-5" viewBox="0 0 20 16" fill="none" stroke="currentColor" stroke-width="1.300"><path d="M.7 5.500h3L8 1.500v13l-4.300-4h-3zM10.500 5.500q2 2.500 0 5"/><path d="M13 3.500q3.500 4.500 0 9M15.500 1.500q5 6.500 0 13" stroke="#aaa"/></svg>
      <svg class="h-4 w-5" viewBox="0 0 20 16"><rect x="1" y="4.500" width="16" height="10" rx="2" fill="none" stroke="currentColor" stroke-width="1.500"/><path d="M7 7h4v5H3.500zM18 7.500h2v4h-2z" fill="currentColor"/><path d="M3.500 0L0 6h2.500L2 10l4.500-6H4z" fill="currentColor"/></svg>
    </button>
    <button class="ml-5 text-right leading-5">10:42 AM<br>30-10-2023</button>
    <button aria-label="Notifications" class="ml-[9px] flex size-5 items-center justify-center rounded-full bg-[#00b7c3] text-xs text-white">3</button>
  </div>
</footer>
</body>
</html>
